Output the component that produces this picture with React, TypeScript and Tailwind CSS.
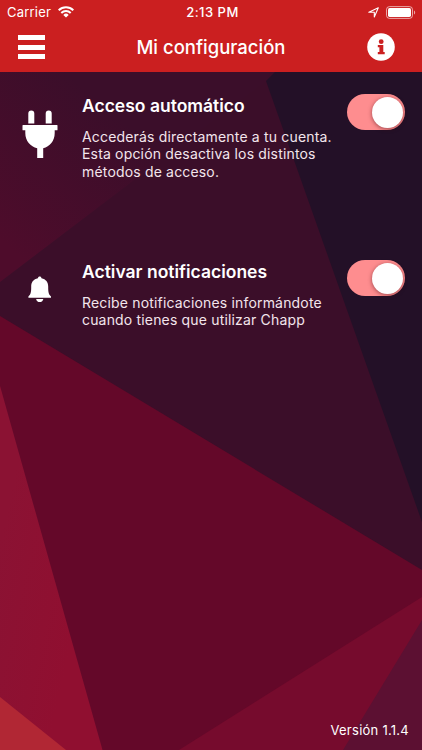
import { useState } from 'react'
import type { ReactNode } from 'react'

function Background() {
  return (
    <svg className="absolute inset-0 h-full w-full" viewBox="0 0 422 750" preserveAspectRatio="none" aria-hidden="true">
      <defs>
        <linearGradient id="glow" gradientUnits="userSpaceOnUse" x1="0" y1="240" x2="110" y2="110">
          <stop offset="0" stopColor="#4e0c2b" />
          <stop offset="1" stopColor="#3b0e2a" />
        </linearGradient>
        <linearGradient id="ember" gradientUnits="userSpaceOnUse" x1="0" y1="540" x2="90" y2="560">
          <stop offset="0" stopColor="#8b1233" />
          <stop offset="1" stopColor="#900f30" />
        </linearGradient>
      </defs>
      <rect width="422" height="750" fill="#3b0e29" />
      <polygon points="0,72 270,72 266,81 150,168 0,282" fill="url(#glow)" />
      <polygon points="275,72 422,72 422,522 266,81" fill="#231027" />
      <polygon points="0,316 422,570 422,750 0,750" fill="#640829" />
      <polygon points="422,597 422,750 179,750" fill="#760b2d" />
      <polygon points="422,620 422,750 343,750" fill="#5c1032" />
      <polygon points="0,386 102.500,750 0,750" fill="url(#ember)" />
      <polygon points="0,697 66,750 0,750" fill="#b12734" />
    </svg>
  )
}

function StatusBar() {
  return (
    <div className="grid h-6 grid-cols-3 items-center px-[7px] text-[13px] leading-6 tracking-[0.2px]">
      <div className="flex items-center gap-[7px]">
        <span>Carrier</span>
        <svg width="16" height="12" viewBox="0 0 16 12" fill="none" stroke="white" strokeWidth="2">
          <path d="M.7 4.300a10.400 10.400 0 0 1 14.600 0M3.300 7a6.700 6.700 0 0 1 9.400 0" />
          <path d="M8 11.500 5.300 8.900a3.900 3.900 0 0 1 5.400 0z" fill="white" stroke="none" />
        </svg>
      </div>
      <span className="pl-[3px] text-center font-medium tracking-[0.5px]">2:13 PM</span>
      <div className="flex items-center justify-end gap-[7px]">
        <svg width="11" height="11" viewBox="0 0 11 11" fill="none" stroke="white" strokeWidth="1.100" strokeLinejoin="round">
          <path d="M10.300.8 6.300 10V5.300H.8z" />
        </svg>
        <svg width="30" height="13" viewBox="0 0 30 13" className="-mr-px">
          <rect x=".5" y=".6" width="26" height="11.800" rx="3" fill="none" stroke="white" strokeOpacity=".6" />
          <rect x="2" y="2.100" width="23" height="8.800" rx="1.600" fill="white" />
          <path d="M28 4.500c1.600.5 1.600 3.500 0 4z" fill="white" fillOpacity=".6" />
        </svg>
      </div>
    </div>
  )
}

function InfoIcon() {
  return (
    <svg width="28" height="28" viewBox="0 0 28 28">
      <circle cx="14" cy="14" r="13.800" fill="white" />
      <circle cx="14.200" cy="8.700" r="2.400" fill="#cb1f20" />
      <path d="M10.800 12h5.500v7h1.400v2.300h-6.900V19h1.600v-4.700h-1.600z" fill="#cb1f20" />
    </svg>
  )
}

function PlugIcon() {
  return (
    <svg width="36" height="48" viewBox="0 0 36 48" fill="white">
      <path d="M6.300 13.500V3.500a3 3 0 0 1 6 0v10zM23.700 13.500V3.500a3 3 0 0 1 6 0v10z" />
      <path d="M1 15h34a.5.5 0 0 1 .5.500v4.200a.5.5 0 0 1-.5.500h-2.300V23c0 8-5 13.500-11.500 15.200V48h-6V38.200C8.500 36.500 3.300 31 3.300 23v-2.800H1a.5.5 0 0 1-.5-.5v-4.200A.5.5 0 0 1 1 15z" />
    </svg>
  )
}

function BellIcon() {
  return (
    <svg width="24" height="27" viewBox="0 0 24 27" fill="white">
      <path d="M11.700.5c1 0 1.600.6 1.800 1.700 4.400.9 6.700 4 6.700 8.300 0 5.200.2 7.700 2.800 9.900v1.300H.4v-1.300c2.600-2.200 2.800-4.700 2.800-9.900 0-4.300 2.300-7.400 6.700-8.300.2-1.100.8-1.700 1.800-1.700z" />
      <path d="M8.100 22.900h7.200c-.3 2-1.700 3.200-3.600 3.200s-3.300-1.200-3.600-3.200z" />
    </svg>
  )
}

function Toggle({ label }: { label: string }) {
  const [on, setOn] = useState(true)

  return (
    <button
      role="switch"
      aria-checked={on}
      aria-label={label}
      onClick={() => setOn(!on)}
      className={`flex h-9 w-[58px] shrink-0 items-center rounded-full px-[2px] ${on ? 'justify-end bg-[#fe8d8f]' : 'justify-start bg-gray-500'}`}
    >
      <span className="size-[31px] rounded-full bg-white shadow-[0_1px_4px_rgba(60,0,10,0.5)]" />
    </button>
  )
}

interface SettingProps {
  icon: ReactNode
  title: string
  lines: string[]
}

function Setting({ icon, title, lines }: SettingProps) {
  return (
    <section className="flex h-[166px] items-start pr-[17px]">
      <div className="flex w-20 shrink-0 justify-center pt-4">{icon}</div>
      <div className="min-w-0 flex-1 pt-px pl-[2px] whitespace-nowrap">
        <h2 className="text-[17.500px] leading-[22px] font-semibold">{title}</h2>
        <p className="mt-[11px] text-[14px] leading-[17.400px] tracking-[0.17px] text-[#f3e5ec]">
          {lines.map((line) => (
            <span key={line} className="block">{line}</span>
          ))}
        </p>
      </div>
      <Toggle label={title} />
    </section>
  )
}

export default function App() {
  return (
    <div className="relative h-[750px] w-[422px] overflow-hidden font-[Inter,sans-serif] text-white">
      <Background />
      <div className="relative flex h-full flex-col">
        <header className="h-[72px] bg-[#cb1f20]">
          <StatusBar />
          <div className="grid h-[46px] grid-cols-[1fr_auto_1fr] items-center px-[18px]">
            <button aria-label="Menú" className="flex w-[27px] flex-col gap-[4.600px]">
              <span className="h-[5px] bg-white" />
              <span className="h-[5px] bg-white" />
              <span className="h-[5px] bg-white" />
            </button>
            <h1 className="pt-px text-[18.500px] font-medium">Mi configuración</h1>
            <button aria-label="Información" className="mr-[9px] justify-self-end">
              <InfoIcon />
            </button>
          </div>
        </header>

        <main className="flex-1 pt-[22px]">
          <Setting
            icon={<PlugIcon />}
            title="Acceso automático"
            lines={['Accederás directamente a tu cuenta.', 'Esta opción desactiva los distintos', 'métodos de acceso.']}
          />
          <Setting
            icon={<BellIcon />}
            title="Activar notificaciones"
            lines={['Recibe notificaciones informándote', 'cuando tienes que utilizar Chapp']}
          />
        </main>

        <footer className="pr-[13px] pb-[10px] text-right text-[13px] leading-5 tracking-[0.25px]">Versión 1.1.4</footer>
      </div>
    </div>
  )
}
